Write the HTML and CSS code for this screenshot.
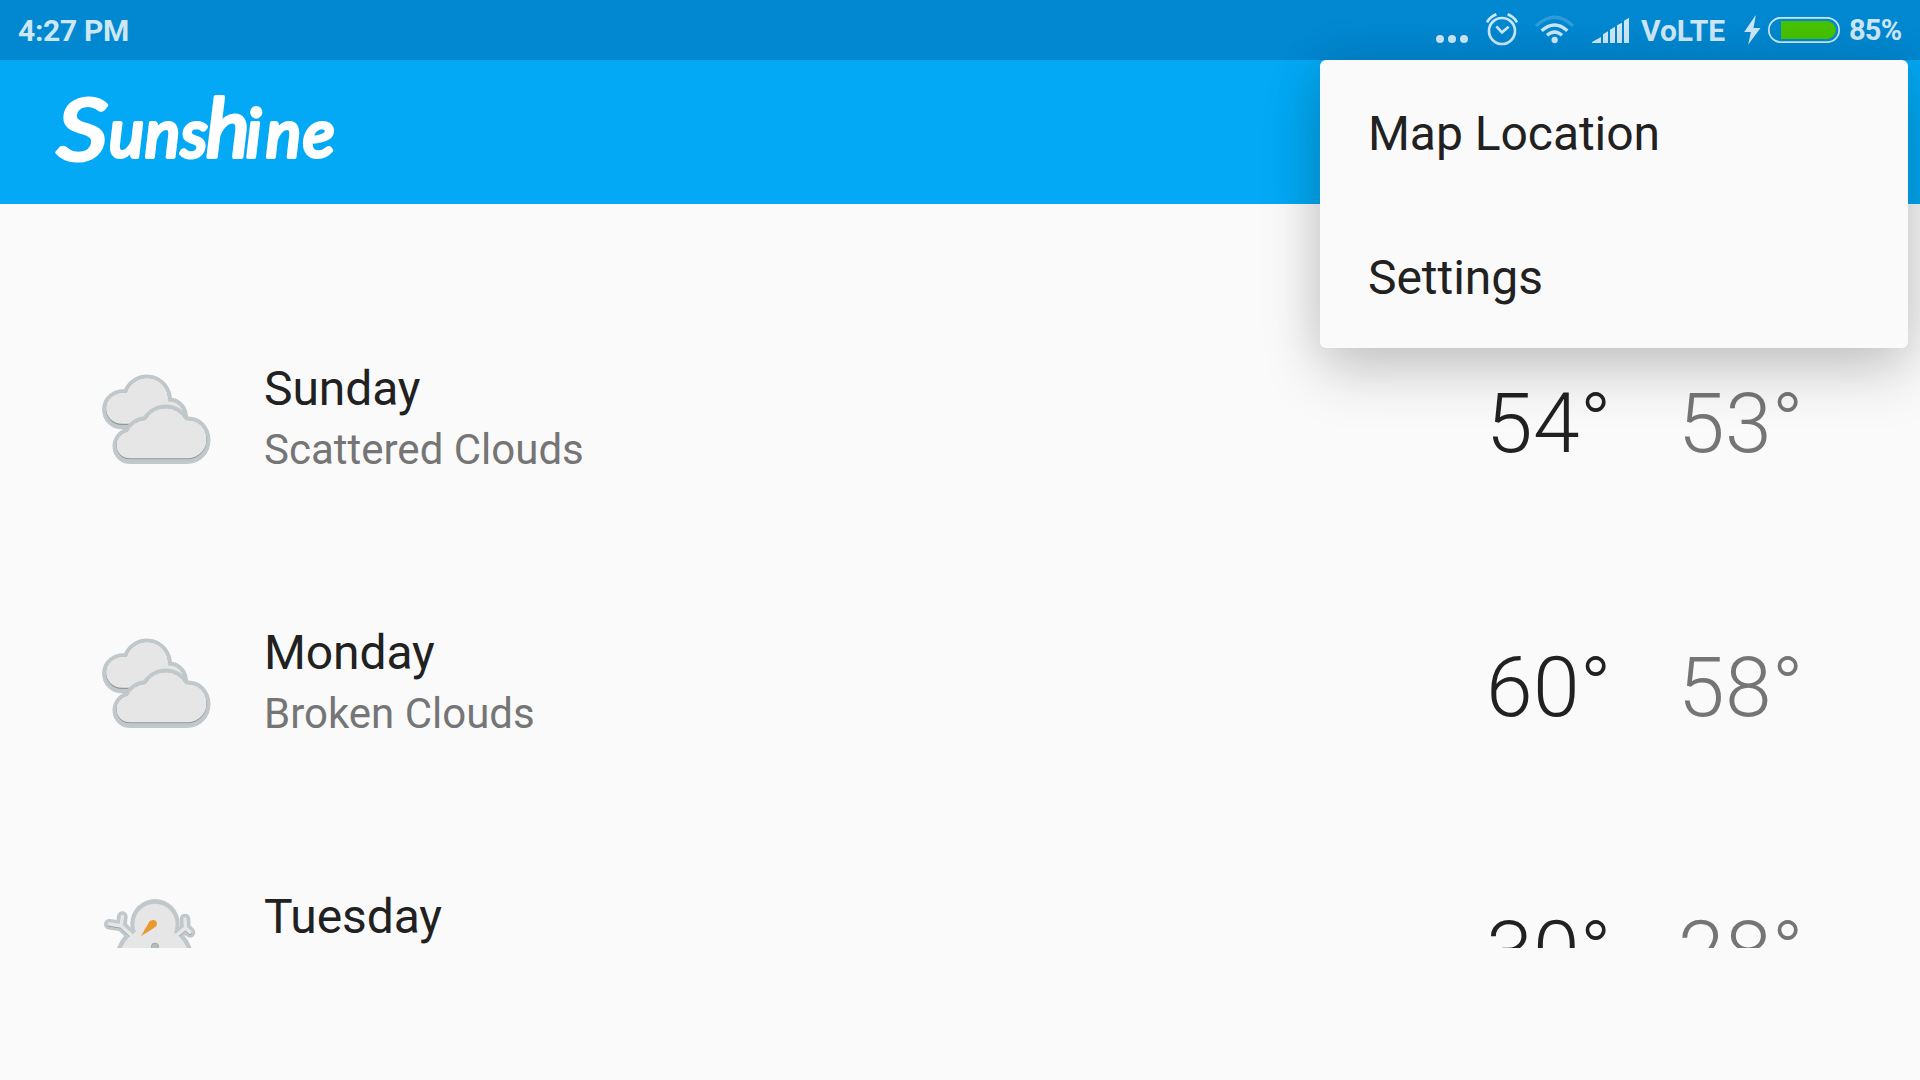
FILE: index.html
```html
<!DOCTYPE html>
<html lang="en">
<head>
<meta charset="utf-8">
<title>Sunshine</title>
<link rel="stylesheet" href="styles.css">
</head>
<body>
<svg class="defs" width="0" height="0" aria-hidden="true">
  <defs>
    <path id="cloud-front" d="M121 298C95 298 79 278 79 257C79 238 92 220 113 215A62 62 0 0 1 167 180A68 68 0 0 1 287 181C325 177 350 206 350 239S324 298 290 298Z"/>
    <path id="cloud-back" d="M97 195C67 195 48 173 48 147S70 95 110 99A63.600 63.600 0 0 1 234 124A45 45 0 0 1 282 165V195Z"/>
    <clipPath id="clip-front"><use href="#cloud-front"/></clipPath>
    <clipPath id="clip-back"><use href="#cloud-back"/></clipPath>
    <symbol id="clouds" viewBox="18 0 360 360">
      <use href="#cloud-back" class="edge"/>
      <use href="#cloud-back" class="edge" y="2"/>
      <use href="#cloud-back" class="shade"/>
      <g clip-path="url(#clip-back)"><use href="#cloud-back" class="paper" y="-4"/></g>
      <use href="#cloud-front" class="edge"/>
      <use href="#cloud-front" class="edge" y="3"/>
      <use href="#cloud-front" class="shade"/>
      <g clip-path="url(#clip-front)"><use href="#cloud-front" class="paper" y="-3"/></g>
    </symbol>
    <symbol id="snowman" viewBox="18 24 360 360">
      <g class="edge-fill"><circle cx="195" cy="131" r="74"/><circle cx="193" cy="245" r="119"/></g>
      <path class="arm-edge" d="M122 164L94 138L58 133M94 138L97 110M262 164L286 144L285 117M286 144L300 157"/>
      <path class="arm-shade" d="M122 166L94 140L58 135M94 140L97 112M262 166L286 146L285 119M286 146L300 159"/>
      <path class="arm" d="M122 164L94 138L58 132M94 138L97 110M262 164L286 144L285 117M286 144L300 156"/>
      <circle class="paper" cx="195" cy="133" r="62"/><circle class="paper" cx="193" cy="245" r="106"/>
      <path class="carrot" d="M153 169L177 127C182 119 194 118 199 125C202 130 201 136 197 140Z"/>
      <circle class="button" cx="195" cy="200" r="11"/>
    </symbol>
  </defs>
</svg>
<div class="screen">
  <header class="status">
    <span class="clock">4:27 PM</span>
    <div class="indicators">
      <svg class="dots" viewBox="78 0 96 180"><circle cx="90" cy="117" r="12"/><circle cx="126" cy="117" r="12"/><circle cx="162" cy="117" r="12"/></svg>
      <svg class="alarm" viewBox="228 0 96 180"><g class="line"><circle cx="276" cy="93" r="39"/><path d="M259 79L276 97L296 80M231 67Q240 51 259 43M321 67Q312 51 293 43"/></g></svg>
      <svg class="wifi" viewBox="376 0 117 180"><g class="line wave"><path class="faint" d="M379 78Q435 25 490 78"/><path d="M396 92Q435 58 473 92M412 106Q435 86 457 106"/></g><circle cx="435" cy="120" r="9.5"/></svg>
      <svg class="signal" viewBox="546 0 111 180"><path d="M546 129V126L573 111V129ZM579 129V103L594 94V129ZM600 129V89L615 80V129ZM621 129V76L636 68V129ZM642 129V62L657 53V129Z"/></svg>
      <span class="network">VoLTE</span>
      <svg class="bolt" viewBox="252 0 50 180"><path d="M287 45L252 96H272L264 134L301 84H280Z"/></svg>
      <svg class="battery" viewBox="324 0 216 180"><rect class="shell" x="326.500" y="53.500" width="211" height="73" rx="36.500"/><path class="charge" d="M363 63H501A27 27 0 0 1 501 117H363Z"/></svg>
      <span class="percent">85%</span>
    </div>
  </header>
  <div class="toolbar">
    <svg class="brand" viewBox="0 0 400 144" role="img"><text class="cap" transform="translate(57 100) scale(1.16 1)">S</text><text x="109 145 181 206 246 266 303" y="97">uns<tspan class="tall">h</tspan>ine</text></svg>
  </div>
  <main class="forecast">
    <section class="day">
      <svg class="weather"><use href="#clouds"/></svg>
      <div class="summary"><h2>Sunday</h2><p>Scattered Clouds</p></div>
      <span class="temp">54°</span><span class="temp low">53°</span>
    </section>
    <section class="day">
      <svg class="weather"><use href="#clouds"/></svg>
      <div class="summary"><h2>Monday</h2><p>Broken Clouds</p></div>
      <span class="temp">60°</span><span class="temp low">58°</span>
    </section>
    <section class="day">
      <svg class="weather"><use href="#snowman"/></svg>
      <div class="summary"><h2>Tuesday</h2></div>
      <span class="temp">30°</span><span class="temp low">28°</span>
    </section>
  </main>
  <nav class="menu"><a class="item">Map Location</a><a class="item">Settings</a></nav>
</div>
</body>
</html>
```
FILE: styles.css
```css
* { box-sizing: border-box; margin: 0; padding: 0; }
body { background: #fafafa; font-family: Roboto, "Liberation Sans", sans-serif; color: #212121; }
.defs { position: absolute; }
.screen { position: relative; width: 1920px; height: 1080px; overflow: hidden; background: #fafafa; }

.status { display: flex; justify-content: space-between; height: 60px; padding-left: 18px; background: #0288d1; color: #cde7f6; font-size: 30px; font-weight: 700; line-height: 61px; white-space: nowrap; }
.clock { letter-spacing: -.3px; }
.indicators { display: flex; width: 484px; }
.indicators svg { flex: none; height: 60px; fill: #cde7f6; }
.indicators .line { fill: none; stroke: #cde7f6; stroke-width: 8; }
.indicators .wave { stroke-width: 10; }
.faint { opacity: .22; }
.dots { width: 32px; }
.alarm { width: 32px; margin-left: 18px; }
.wifi { width: 39px; margin-left: 17px; }
.signal { width: 37px; margin-left: 18px; }
.network { width: 115px; padding-left: 12px; }
.bolt { width: 17px; }
.battery { width: 72px; margin-left: 7px; }
.battery .shell { fill: none; stroke: #cde7f6; stroke-width: 5; }
.battery .charge { fill: #47c200; }
.percent { padding-left: 9px; font-size: 29px; letter-spacing: -.8px; }

.toolbar { height: 144px; background: #03a9f4; }
.brand { display: block; width: 400px; height: 144px; fill: #fff; stroke: #fff; stroke-width: 4px; stroke-linejoin: round; stroke-linecap: round; font: italic 400 66px Lato, sans-serif; }
.cap { font-size: 86px; }
.tall { font-size: 82px; }

.forecast { height: 744px; padding-top: 84px; overflow: hidden; }
.day { display: flex; align-items: center; height: 264px; padding: 0 96px; }
.weather { flex: none; width: 120px; height: 120px; }
.summary { flex: 1; height: 120px; margin-left: 48px; }
.summary h2 { font-size: 48px; font-weight: 400; line-height: 57px; letter-spacing: -.1px; }
.summary p { font-size: 42px; line-height: 66px; color: #757575; }
.temp { width: 192px; padding: 8px 0 0 46px; font-size: 84px; font-weight: 300; line-height: 98px; letter-spacing: .3px; }
.low { color: #757575; }

.edge { fill: #c1c8cc; stroke: #c1c8cc; stroke-width: 22; stroke-linejoin: round; }
.edge-fill { fill: #c1c8cc; }
.shade { fill: #8f9699; }
.paper { fill: #e6e6e6; }
.arm-edge, .arm-shade, .arm { fill: none; stroke-linecap: round; stroke-linejoin: round; }
.arm-edge { stroke: #c1c8cc; stroke-width: 32; }
.arm-shade { stroke: #969da0; stroke-width: 11; }
.arm { stroke: #e6e6e6; stroke-width: 11; }
.carrot { fill: #ea9a2d; }
.button { fill: #b3bbbf; stroke: #999fa2; stroke-width: 2; }

.menu { position: absolute; top: 60px; left: 1320px; width: 588px; height: 288px; border-radius: 6px; background: #fafafa; box-shadow: 0 24px 60px rgba(0, 0, 0, .18), 0 0 50px rgba(0, 0, 0, .1); }
.item { display: block; height: 144px; padding-left: 48px; font-size: 48px; line-height: 147px; letter-spacing: -.05px; }
```
